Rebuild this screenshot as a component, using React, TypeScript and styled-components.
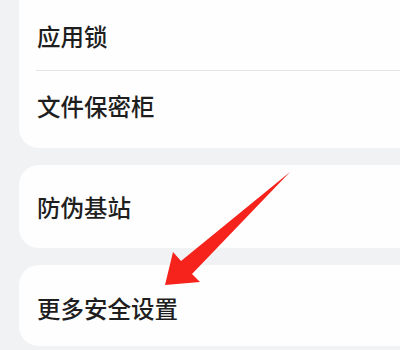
import React from 'react';
import styled, { createGlobalStyle } from 'styled-components';

const GlobalStyle = createGlobalStyle`
  html, body {
    margin: 0;
    padding: 0;
    background: #f1f2f4;
    overflow: hidden;
  }
  body {
    font-family: "Noto Sans CJK SC", "Noto Sans", sans-serif;
  }
`;

const Page = styled.div`
  position: relative;
  width: 400px;
  height: 350px;
  overflow: hidden;
  background: #f1f2f4;
  display: flex;
  flex-direction: column;
  gap: 17px;
`;

const Card = styled.div<{ $top?: number }>`
  margin-top: ${p => p.$top ?? 0}px;
  margin-left: 19px;
  width: 420px;
  background: #fefefe;
  border-radius: 20px;
  flex-shrink: 0;
  display: flex;
  flex-direction: column;
`;

const Row = styled.div<{ $h: number; $shift?: number }>`
  height: ${p => p.$h}px;
  padding-left: 18px;
  display: flex;
  align-items: center;
  font-size: 23.5px;
  font-weight: 500;
  line-height: 1;
  color: #1e1e1e;
  box-sizing: border-box;
  padding-top: ${p => Math.max(0, p.$shift ?? 0)}px;
  padding-bottom: ${p => Math.max(0, -(p.$shift ?? 0))}px;
`;

const Divider = styled.div`
  height: 1px;
  margin-left: 17px;
  background: #e4e4e6;
`;

// red annotation arrow drawn over the list
const Arrow = styled.svg`
  position: absolute;
  left: 0;
  top: 0;
  pointer-events: none;
`;

export default function App() {
  return (
    <>
      <GlobalStyle />
      <Page>
        <Card $top={-24}>
          <Row $h={94} $shift={28}>应用锁</Row>
          <Divider />
          <Row $h={77} $shift={-5}>文件保密柜</Row>
        </Card>
        <Card>
          <Row $h={83} $shift={3}>防伪基站</Row>
        </Card>
        <Card>
          <Row $h={81} $shift={6}>更多安全设置</Row>
        </Card>
        <Arrow width="400" height="350" viewBox="0 0 400 350">
          <polygon
            points="165,285 173,252 181,261 290,172 192,274 200,282"
            fill="#f5231c"
          />
        </Arrow>
      </Page>
    </>
  );
}
